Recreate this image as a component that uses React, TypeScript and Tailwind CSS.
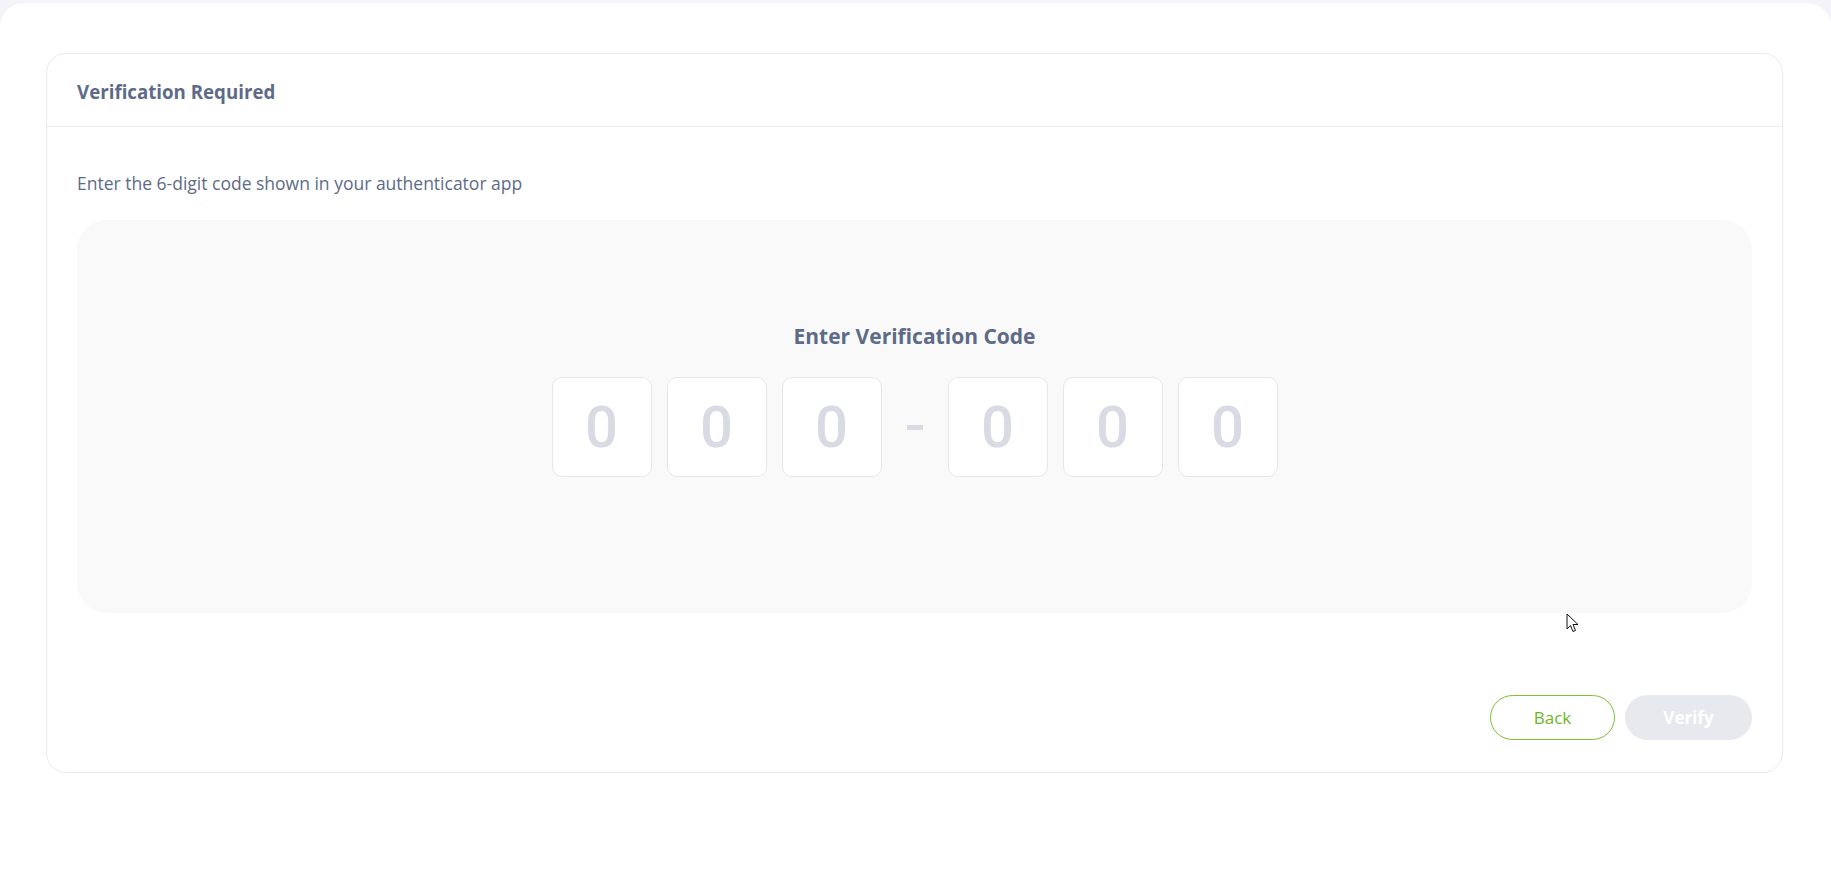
import React from "react";

const Digit = () => (
  <div className="w-[100px] h-[100px] rounded-[10px] border border-[#e6e7ee] bg-white flex items-center justify-center">
    <span className="text-[58px] font-medium leading-none text-[#d8dbe3]" style={{ fontFamily: "Roboto, sans-serif" }}>0</span>
  </div>
);

export default function App() {
  return (
    <div className="min-h-screen bg-[#f3f3f9] pt-[3px]" style={{ fontFamily: "'Open Sans', 'Noto Sans', sans-serif" }}>
      <div className="relative bg-white rounded-t-[24px] h-[872px] pt-[50px] pl-[46px] pr-[48px]">
        <div className="h-[720px] border border-[#e8e9ed] rounded-[20px] flex flex-col">
          <div className="h-[73px] border-b border-[#ecedf1] px-[30px] flex items-center">
            <h1 className="text-[18.7px] font-bold text-[#5d6b88] pt-[4px]">Verification Required</h1>
          </div>
          <div className="px-[30px] pt-[45px] flex flex-col flex-1">
            <p className="text-[17.5px] text-[#5d6b88] leading-[22px]">Enter the 6-digit code shown in your authenticator app</p>
            <div className="mt-[26px] h-[393px] rounded-[30px] bg-[#f9f9fa] flex flex-col items-center pt-[101px]">
              <h2 className="text-[21px] font-bold text-[#5d6b88] leading-[30px]">Enter Verification Code</h2>
              <div className="mt-[26px] flex items-center gap-[15px]">
                <Digit />
                <Digit />
                <Digit />
                <div className="mx-[10px] w-[16px] h-[5px] bg-[#d8dbe3]" />
                <Digit />
                <Digit />
                <Digit />
              </div>
            </div>
            <div className="mt-[82px] flex justify-end gap-[10px]">
              <button className="w-[125px] h-[45px] rounded-full border border-[#7cc233] text-[#6fb51f] text-[17px] bg-white">Back</button>
              <button className="w-[127px] h-[45px] rounded-full bg-[#e8e9ef] text-white text-[17px] font-bold">Verify</button>
            </div>
          </div>
        </div>
        <svg className="absolute left-[1566px] top-[610px]" width="13" height="20" viewBox="0 0 13 20">
          <path d="M1 1 L1 16 L4.5 12.5 L7 18.5 L9.5 17.5 L7 11.5 L12 11.5 Z" fill="white" stroke="#111" strokeWidth="1" strokeLinejoin="round" />
        </svg>
      </div>
    </div>
  );
}
